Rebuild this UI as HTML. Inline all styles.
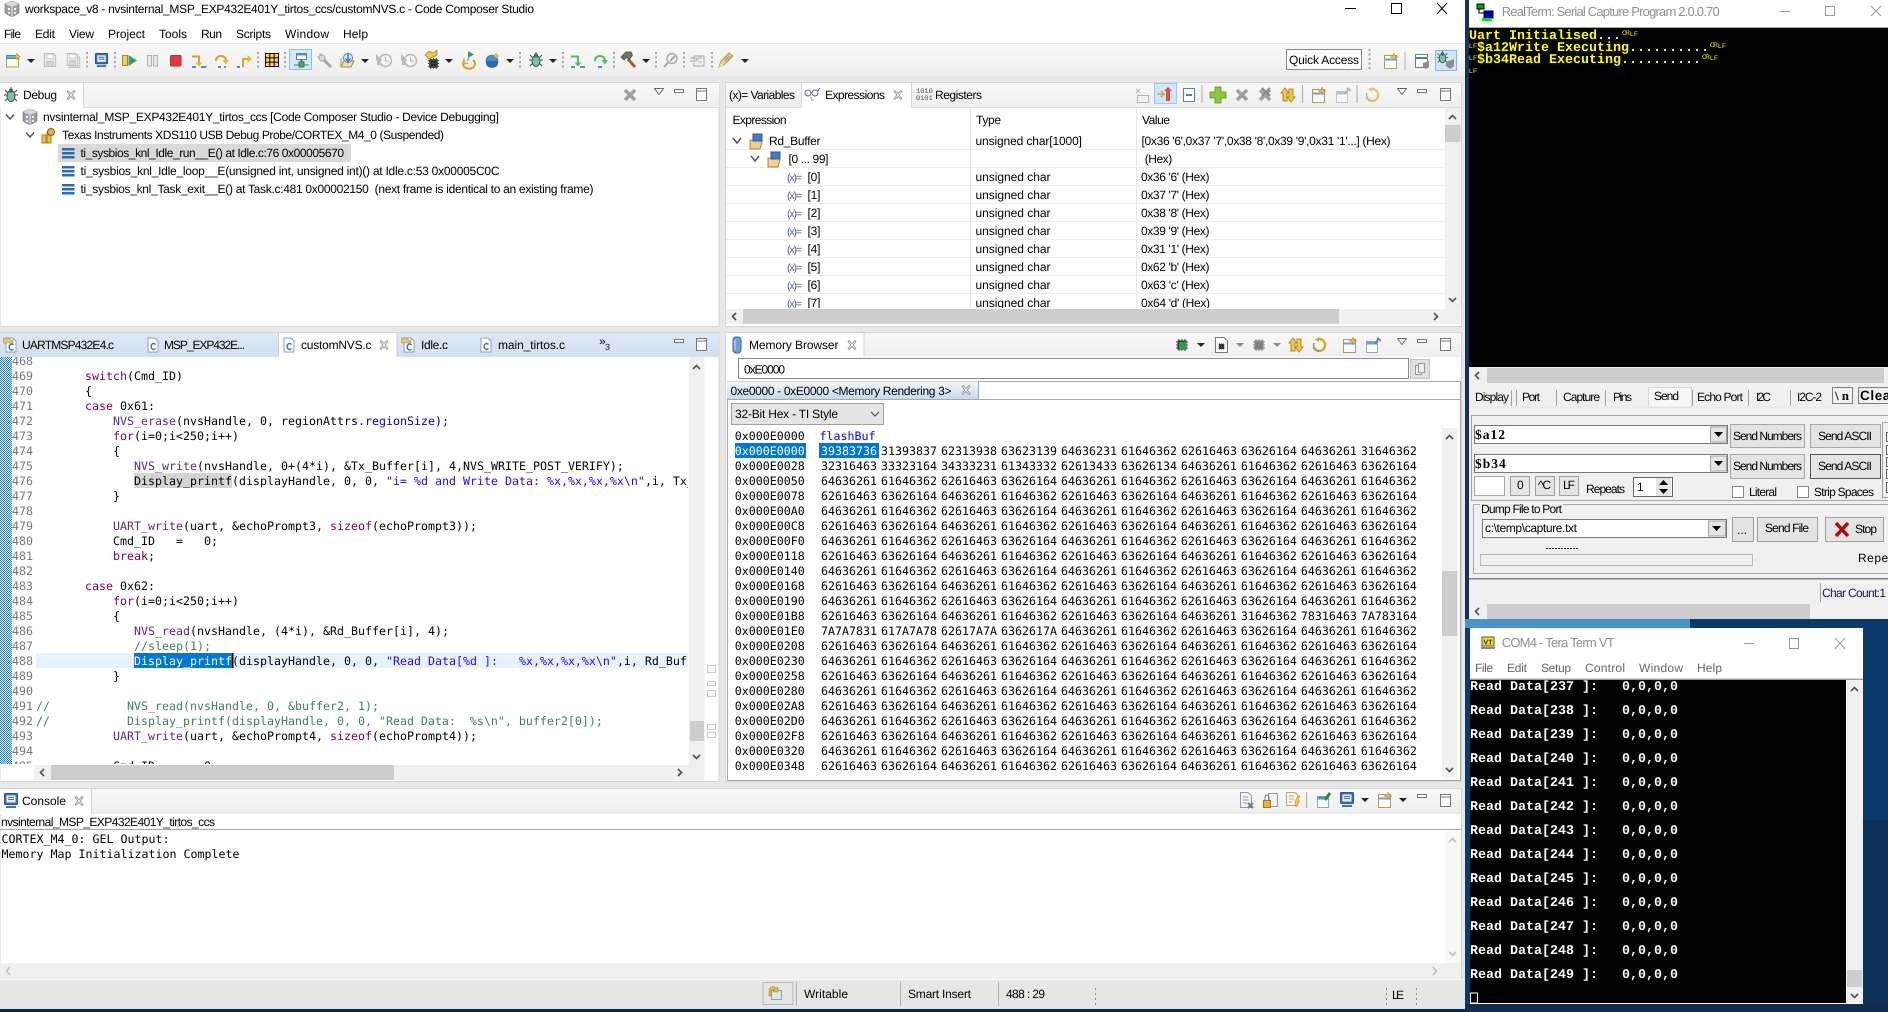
<!DOCTYPE html>
<html><head><meta charset="utf-8"><title>Code Composer Studio</title>
<style>
html,body{margin:0;padding:0;background:#0c2a4b;width:1888px;height:1012px;overflow:hidden}
svg{position:absolute;left:0;top:0;display:block}
text{white-space:pre;text-rendering:geometricPrecision}
.s{font:12px "Liberation Sans",sans-serif;fill:#000}
.g{font:12px "Liberation Sans",sans-serif;fill:#909090}
.m{font:11.63px "DejaVu Sans Mono",monospace;fill:#000}
.h{font:11.63px "DejaVu Sans Mono",monospace;fill:#000;word-spacing:-3px}
.n{font:11.63px "DejaVu Sans Mono",monospace;fill:#787878}
.y{font:bold 13.33px "Liberation Mono",monospace;fill:#ff0}
.w{font:bold 13.33px "Liberation Mono",monospace;fill:#fff}
.c{font:6.5px "Liberation Sans",sans-serif;fill:#ff0}
.v{font:10.5px "Liberation Sans",sans-serif;fill:#4a5a8a}
.kw{fill:#7f0055}.fn{fill:#642880}.fd{fill:#0000c0}.st{fill:#2a00ff}.cm{fill:#3f7f5f}
</style></head><body>
<svg width="1888" height="1012" viewBox="0 0 1888 1012" xmlns="http://www.w3.org/2000/svg">
<defs>
<linearGradient id="gs" x1="0" y1="0" x2="0" y2="1"><stop offset="0" stop-color="#f8f8f8"/><stop offset="1" stop-color="#efefef"/></linearGradient>
<linearGradient id="gb" x1="0" y1="0" x2="0" y2="1"><stop offset="0" stop-color="#dfe9f6"/><stop offset="1" stop-color="#d0dff1"/></linearGradient>
<linearGradient id="gt" x1="0" y1="0" x2="0" y2="1"><stop offset="0" stop-color="#f4f8fc"/><stop offset="1" stop-color="#c6d9ee"/></linearGradient>
<pattern id="hatch" width="2" height="2" patternUnits="userSpaceOnUse"><rect width="2" height="2" fill="#fff"/><rect width="1" height="1" fill="#0f7ed4"/><rect x="1" y="1" width="1" height="1" fill="#0f7ed4"/></pattern>
<clipPath id="cEd"><rect x="0" y="357" width="688" height="407"/></clipPath>
<clipPath id="cEx"><rect x="726" y="110" width="719" height="198"/></clipPath>
<clipPath id="cRT"><rect x="1469" y="383" width="419" height="240"/></clipPath>
<symbol id="x" viewBox="0 0 10 10" width="10" height="10"><path d="M1 1.500 2 .5 5 3.500 8 .5 9 1.500 6 5 9 8.500 8 9.500 5 6.500 2 9.500 1 8.500 4 5Z" fill="#fff" stroke="#8a8a8a" stroke-width=".8"/></symbol>
<symbol id="cf" viewBox="0 0 16 16" width="16" height="16"><path d="M3 1H10L13 4V15H3Z" fill="#fff" stroke="#8aa0b8"/><path d="M10.500 7.500A2.500 3 0 1 0 10.500 11.500" fill="none" stroke="#3a6ea8" stroke-width="1.400"/></symbol>
<symbol id="ch" viewBox="0 0 16 16" width="16" height="16"><path d="M3 1H10L13 4V15H3Z" fill="#fff" stroke="#8aa0b8"/><path d="M10.500 8A2.500 3 0 1 0 10.500 12" fill="none" stroke="#3a6ea8" stroke-width="1.400"/><path d="M0 1H6L7 3H10V6H0Z" fill="#e3c36e" stroke="#a8893a" stroke-width=".6"/></symbol>
<symbol id="cube" viewBox="0 0 16 16" width="16" height="16"><path d="M8 0 15 3V12L8 16 1 12V3Z" fill="#9aa0a6" stroke="#6a6e72" stroke-width=".6"/><path d="M8 0 15 3 8 6 1 3Z" fill="#d8dadc"/><path d="M8 6V16" stroke="#eee"/><rect x="4" y="7" width="2" height="2" fill="#fff"/><rect x="10" y="7" width="2" height="2" fill="#fff"/><rect x="4" y="11" width="2" height="2" fill="#eee"/><rect x="10" y="11" width="2" height="2" fill="#eee"/></symbol>
<symbol id="bug" viewBox="0 0 16 16" width="16" height="16"><path d="M2 3 5 6M14 3 11 6M1 8H4M15 8H12M2 14 5 11M14 14 11 11M8 0V3" stroke="#3f4f3a" fill="none"/><ellipse cx="8" cy="9" rx="4" ry="5.500" fill="#7fbfa0" stroke="#2f5f4a"/><circle cx="8" cy="3.500" r="2" fill="#2f6f5f"/></symbol>
<symbol id="new" viewBox="0 0 16 16" width="16" height="16"><rect x="1.500" y="3.500" width="11" height="12" fill="#fff" stroke="#b89a4a"/><rect x="1.500" y="3.500" width="11" height="3" fill="#6fa2cf" stroke="#4a7fae"/><path d="M12 0 13 3 16 4 13 5 12 8 11 5 8 4 11 3Z" fill="#f0c040" stroke="#b08a20" stroke-width=".5"/></symbol>
<symbol id="save" viewBox="0 0 16 16" width="16" height="16"><path d="M1.500 .5H12L14.500 3V15.500H1.500Z" fill="#ececec" stroke="#b4b4b4"/><rect x="4.500" y="1.500" width="7" height="5" fill="#fff" stroke="#c8c8c8"/><rect x="4.500" y="9.500" width="7" height="6" fill="#d4d4d4" stroke="#bdbdbd"/></symbol>
<symbol id="mon" viewBox="0 0 16 16" width="16" height="16"><rect x="1.500" y="0.500" width="13" height="11" rx="1" fill="#3f70a8" stroke="#2a5488"/><rect x="3.500" y="2.500" width="9" height="7" fill="#e8eff7"/><path d="M5 4.500H11M5 6.500H11" stroke="#3f70a8"/><rect x="3" y="13" width="10" height="2" fill="#3f70a8"/></symbol>
<symbol id="drop" viewBox="0 0 8 4" width="8" height="4"><path d="M0 0H8L4 4Z" fill="#222"/></symbol>
<symbol id="vtri" viewBox="0 0 10 7" width="10" height="7"><path d="M.5 .5H9.500L5 6.500Z" fill="#fff" stroke="#666"/></symbol>
<symbol id="vmin" viewBox="0 0 10 4" width="10" height="4"><rect x=".5" y=".5" width="9" height="3" fill="#fff" stroke="#777"/></symbol>
<symbol id="vmax" viewBox="0 0 11 13" width="11" height="13"><rect x=".5" y=".5" width="10" height="12" fill="#fff" stroke="#777"/><path d="M.5 3H10.500" stroke="#777"/></symbol>
<symbol id="grayx" viewBox="0 0 16 16" width="16" height="16"><path d="M3 3 13 13M13 3 3 13" stroke="#a0a0a0" stroke-width="3.500"/></symbol>
<symbol id="chip" viewBox="0 0 16 16" width="16" height="16"><rect x="3.500" y="3.500" width="9" height="9" fill="#222"/><path d="M2 5H14M2 8H14M2 11H14M5 2V14M8 2V14M11 2V14" stroke="#444"/></symbol>
<symbol id="sync" viewBox="0 0 16 16" width="16" height="16"><path d="M3 14V6H1L5 1 9 6H7V14Z" fill="#f0c850" stroke="#b08a20"/><path d="M9 2V10H7L11 15 15 10H13V2Z" fill="#f0c850" stroke="#b08a20"/></symbol>
<symbol id="loop" viewBox="0 0 16 16" width="16" height="16"><path d="M8 2A6 6 0 1 1 2.500 10" fill="none" stroke="#d9a520" stroke-width="2.200"/><path d="M8 14A6 6 0 0 1 3 6" fill="none" stroke="#8f8f8f" stroke-width="1.500"/><path d="M8 0V5L4 2.500Z" fill="#d9a520"/></symbol>
<symbol id="pin" viewBox="0 0 16 16" width="16" height="16"><rect x="1.500" y="4.500" width="11" height="11" fill="#fff" stroke="#8aa8c8"/><rect x="1.500" y="4.500" width="11" height="3" fill="#6fa2cf"/><path d="M10 7 14 1M12 1 16 4" stroke="#777" stroke-width="1.600"/></symbol>
<symbol id="view" viewBox="0 0 16 16" width="16" height="16"><rect x="1.500" y="2.500" width="12" height="13" fill="#fff" stroke="#b89a4a"/><path d="M11 0 12 3 15 4 12 5 11 8 10 5 7 4 10 3Z" fill="#f0c040" stroke="#b08a20" stroke-width=".5"/><path d="M1.500 6.500H13.500" stroke="#6fa2cf" stroke-width="2"/></symbol>
<symbol id="clk" viewBox="0 0 18 16" width="18" height="16"><circle cx="10.500" cy="7.500" r="6" fill="#f4f4f4" stroke="#b8b8b8" stroke-width="1.400"/><path d="M10.500 4V7.500L13.500 9" stroke="#b0b0b0" fill="none"/><path d="M1 1 7 7 5 9 8 12H2V8L1 7Z" fill="#bcbcbc"/></symbol>
</defs>

<!-- base -->
<rect width="1888" height="1012" fill="#0c2a4b"/>
<rect x="0" y="0" width="1465" height="1009" fill="#e8e8e8"/>
<rect x="0" y="0" width="1465" height="43" fill="#fff"/>
<rect x="0" y="43" width="1465" height="33" fill="url(#gs)"/>
<rect x="0" y="43" width="1465" height="1" fill="#e6e6e6"/>

<!-- title -->
<use href="#cube" x="4" y="1"/>
<text class="s" x="25" y="13" textLength="509" fill="#111">workspace_v8 - nvsinternal_MSP_EXP432E401Y_tirtos_ccs/customNVS.c - Code Composer Studio</text>
<path d="M1345 8.500H1356" stroke="#000"/><rect x="1391.500" y="3.500" width="10" height="10" fill="none" stroke="#000"/><path d="M1437 3 1447 14M1447 3 1437 14" stroke="#000"/>
<text class="s" x="4" y="38" textLength="17">File</text><text class="s" x="35" y="38" textLength="20">Edit</text><text class="s" x="69" y="38" textLength="25">View</text><text class="s" x="108" y="38" textLength="37">Project</text><text class="s" x="159" y="38" textLength="28">Tools</text><text class="s" x="201" y="38" textLength="21">Run</text><text class="s" x="236" y="38" textLength="35">Scripts</text><text class="s" x="285" y="38" textLength="44">Window</text><text class="s" x="343" y="38" textLength="25">Help</text>

<!-- toolbar -->
<g transform="translate(6 53)"><rect x=".5" y="2.500" width="12" height="11.500" fill="#fffbe8" stroke="#b89a4a"/><rect x=".5" y="2.500" width="12" height="3" fill="#7fb0da" stroke="#4a7fae"/><path d="M11 0 12 2.500 14.500 3.500 12 4.500 11 7 10 4.500 7.500 3.500 10 2.500Z" fill="#f4c840" stroke="#b08a20" stroke-width=".5"/></g>
<use href="#drop" x="27" y="59"/>
<use href="#save" x="43" y="53" width="14" height="14"/><use href="#save" x="68" y="55" width="13" height="13"/><use href="#save" x="66" y="53" width="13" height="13"/>
<path d="M87 52V69M115 52V69M258 52V69M285 52V69M520 52V69M563 52V69M614 52V69M656 52V69M684 52V69M712 52V69" stroke="#a8a8a0" stroke-width="2" stroke-dasharray="2 2.500"/>
<use href="#mon" x="94" y="53" width="15" height="15"/>
<g transform="translate(122 55)"><rect x=".5" y=".5" width="5" height="10" fill="#f0d060" stroke="#a88a20"/><path d="M6.500 0 15 5.500 6.500 11Z" fill="#3c9a6a"/></g>
<g transform="translate(147 55)" fill="#e9e9e9" stroke="#b4b4b4"><rect x=".5" y=".5" width="4" height="10.500"/><rect x="6.500" y=".5" width="4" height="10.500"/></g>
<rect x="170.500" y="55.500" width="10.500" height="10.500" rx="1" fill="#e63838" stroke="#b03040"/>
<g transform="translate(191 54)" fill="none"><path d="M1 2.500H8V9" stroke="#d9a520" stroke-width="2"/><path d="M4.500 8.500H11.500L8 12.500Z" fill="#e8b830"/><path d="M1 13H5M10 13H15.500" stroke="#2a6ea8" stroke-width="1.600"/></g>
<g transform="translate(214 54)" fill="none"><path d="M2 7A5 4.500 0 0 1 12 6" stroke="#d9a520" stroke-width="2"/><path d="M8.500 6H15L12 10.500Z" fill="#e8b830"/><path d="M4 13H7M10 13H12" stroke="#2a6ea8" stroke-width="1.600"/></g>
<g transform="translate(237 54)" fill="none"><path d="M6 13V5H11" stroke="#d9a520" stroke-width="2"/><path d="M10.500 1 15 5 10.500 9Z" fill="#e8b830"/><path d="M0 13H3" stroke="#2a6ea8" stroke-width="1.600"/></g>
<g transform="translate(265 53)"><rect x=".5" y=".5" width="13" height="13" fill="#ffcf50" stroke="#000"/><path d="M4.800 .5V13.500M9.200 .5V13.500M.5 4.800H13.500M.5 9.200H13.500" stroke="#000"/></g>
<rect x="289.500" y="49.500" width="22" height="20" fill="#d4e9fb" stroke="#8cc0ec"/>
<g transform="translate(293 52)"><rect x="3.500" y="1.500" width="10" height="6" fill="#fff" stroke="#5a7ea8"/><rect x="3.500" y="1.500" width="10" height="2" fill="#5a90c8"/><path d="M8.500 7V11" stroke="#666" stroke-width="2"/><path d="M1 13H16" stroke="#6a8aa8" stroke-width="1.200"/><rect x="6" y="10" width="5" height="5" fill="#5aaa5a" stroke="#357a35"/></g>
<g transform="translate(317 53)" stroke="#a8a8a8" fill="none"><path d="M2 1 4 3M0 4 3 4M4 0 4 3" /><circle cx="5" cy="5" r="3" fill="#ddd"/><path d="M7 7 14 14" stroke-width="3"/></g>
<g transform="translate(340 53)"><path d="M1 5V14H11L14 8H4L1 14" fill="#f3deaa" stroke="#b08a3a"/><circle cx="8" cy="5" r="4.500" fill="#dbe9f7" stroke="#5a7ea8"/><path d="M8 1V8M5.500 5.500 8 8.500 10.500 5.500" fill="none" stroke="#2f6fb0" stroke-width="1.300"/></g><use href="#drop" x="361" y="59"/>
<use href="#clk" x="375" y="53"/><use href="#clk" x="400" y="53"/>
<use href="#chip" x="426" y="56" width="15" height="15"/><path d="M425 55 429 51 433 53 437 50V55L433 57 429 59Z" fill="#f0c840" stroke="#a88010" stroke-width=".7"/><use href="#drop" x="445" y="59"/>
<g transform="translate(461 51)" fill="none"><path d="M3 10A6 5 0 1 0 12 9" stroke="#d9a520" stroke-width="2"/><path d="M3 7.500V12.500H7" stroke="#d9a520" stroke-width="1.500"/><path d="M7 0 13 3.500 7 7Z" fill="#3c9a6a"/><path d="M7 7V10" stroke="#3c9a6a"/></g>
<g transform="translate(486 53)"><ellipse cx="6" cy="8" rx="6" ry="6" fill="#4a8ed0" stroke="#2a62a0" stroke-width=".6"/><path d="M0 8H12V10A6 5 0 0 1 0 10Z" fill="#2f6aac"/><path d="M10 0 11 2 13 3 11 4 10 6 9 4 7 3 9 2Z" fill="#f0c040" stroke="#a88010" stroke-width=".4"/></g><use href="#drop" x="506" y="59"/>
<use href="#bug" x="528" y="52"/><use href="#drop" x="549" y="59"/>
<g transform="translate(570 54)" fill="none"><path d="M1 2.500H8V9" stroke="#4cc060" stroke-width="2"/><path d="M4.500 8.500H11.500L8 12.500Z" fill="#4cc060"/><path d="M1 13H5M10 13H15" stroke="#2a6ea8" stroke-width="1.600"/></g>
<g transform="translate(593 54)" fill="none"><path d="M2 7A5 4.500 0 0 1 12 6" stroke="#4cc060" stroke-width="2"/><path d="M8.500 6H15L12 10.500Z" fill="#4cc060"/><path d="M5 13H9" stroke="#2a6ea8" stroke-width="1.600"/></g>
<g transform="translate(621 52)"><path d="M7 7 14 15" stroke="#9a6a30" stroke-width="3"/><path d="M0 5 5 0H10L11.500 3 8 8 6 5 3 8Z" fill="#70706e" stroke="#444" stroke-width=".7"/></g><use href="#drop" x="642" y="59"/>
<g transform="translate(663 52)" fill="none" stroke="#a8a8a8"><circle cx="9" cy="6.500" r="5" stroke-width="1.400"/><path d="M5 10.500 1 15M12 4 7 9" stroke-width="2"/></g>
<g transform="translate(690 53)" fill="none" stroke="#b4b4b4" stroke-width="1.200"><path d="M4 3H14V13H4V10M4 7V3"/><path d="M0 5H6L8 6.500 6 8H0M8 5H12M8 9H12"/></g>
<g transform="translate(718 52)"><path d="M1 15 3 9 11 1 15 4 7 12Z" fill="#f1cf7d" stroke="#b8973a"/><path d="M6 7 11 3 13 5 8 10Z" fill="#b0b0a8"/><path d="M1 15 3 11 5 13Z" fill="#f4f0c0"/></g><use href="#drop" x="741" y="59"/>
<rect x="1286.500" y="49.500" width="75" height="20" fill="#fff" stroke="#888"/>
<text class="s" x="1289" y="64" textLength="70" fill="#444">Quick Access</text>
<path d="M1369.500 49V71" stroke="#a8a8a0" stroke-width="2" stroke-dasharray="2 2.500"/><path d="M1405 52V70" stroke="#b8b8b8"/>
<use href="#view" x="1383" y="53"/>
<g transform="translate(1414 53)"><rect x="1.500" y="1.500" width="12" height="13" fill="#fff" stroke="#777"/><path d="M1.500 5H13.500" stroke="#4a7fae" stroke-width="2"/><path d="M9 10 15 8V14L12 16 9 14Z" fill="#8c8c8c"/></g>
<rect x="1435.500" y="50.500" width="21" height="20" fill="#cfe6fb" stroke="#7fb8e8"/><use href="#bug" x="1436" y="51" width="13" height="13"/><path d="M1446 62 1454 59V66L1450 69 1446 66Z" fill="#8c8c8c"/>

<!-- Debug view -->
<rect x="0" y="82.500" width="719" height="244" fill="#fff" stroke="#d6d6d6"/>
<rect x="0" y="83" width="719" height="24" fill="url(#gs)"/>
<path d="M0 107.500H719" stroke="#dedede"/>
<rect x="0" y="83" width="83" height="25" fill="#fff"/><path d="M83.500 83V107" stroke="#d6d6d6"/>
<use href="#bug" x="3" y="87"/>
<text class="s" x="23" y="99" textLength="34" fill="#222">Debug</text><use href="#x" x="66" y="90"/>
<use href="#grayx" x="622" y="87"/><use href="#vtri" x="654" y="88"/><use href="#vmin" x="674" y="89"/><use href="#vmax" x="696" y="88"/>
<path d="M6 114.500 10 119 14 114.500M26 132.500 30 137 34 132.500" fill="none" stroke="#555" stroke-width="1.500"/>
<use href="#cube" x="22" y="109"/>
<text class="s" x="43" y="121" textLength="456">nvsinternal_MSP_EXP432E401Y_tirtos_ccs [Code Composer Studio - Device Debugging]</text>
<g transform="translate(41 127)"><rect x="1" y="8" width="4" height="8" fill="#e8c050" stroke="#a88020"/><rect x="6" y="5" width="4" height="11" fill="#e8c050" stroke="#a88020"/><circle cx="10" cy="5" r="3.500" fill="#e8b040" stroke="#8a5a20"/></g>
<text class="s" x="62" y="139" textLength="382">Texas Instruments XDS110 USB Debug Probe/CORTEX_M4_0 (Suspended)</text>
<rect x="58" y="144" width="293" height="18" fill="#d9d9d9"/>
<g fill="#2a6cb0"><rect x="62" y="148" width="12.500" height="2.500"/><rect x="62" y="152" width="12.500" height="2.500"/><rect x="62" y="156" width="12.500" height="2.500"/><rect x="62" y="166" width="12.500" height="2.500"/><rect x="62" y="170" width="12.500" height="2.500"/><rect x="62" y="174" width="12.500" height="2.500"/><rect x="62" y="184" width="12.500" height="2.500"/><rect x="62" y="188" width="12.500" height="2.500"/><rect x="62" y="192" width="12.500" height="2.500"/></g>
<text class="s" x="80.500" y="157" textLength="263.500">ti_sysbios_knl_Idle_run__E() at Idle.c:76 0x00005670</text>
<text class="s" x="80.500" y="175" textLength="419">ti_sysbios_knl_Idle_loop__E(unsigned int, unsigned int)() at Idle.c:53 0x00005C0C</text>
<text class="s" x="80.500" y="193" textLength="513">ti_sysbios_knl_Task_exit__E() at Task.c:481 0x00002150  (next frame is identical to an existing frame)</text>

<!-- Expressions view -->
<rect x="725.500" y="82.500" width="736" height="244" fill="#fff" stroke="#d6d6d6"/>
<rect x="726" y="83" width="735" height="24" fill="url(#gs)"/>
<path d="M726 107.500H1461" stroke="#dedede"/>
<rect x="801" y="83" width="110" height="25" fill="#fff"/><path d="M801.500 83V107M911.500 83V107" stroke="#d6d6d6"/>
<text class="s" x="729" y="99" textLength="66" fill="#222">(x)= Variables</text>
<g transform="translate(804 87)" fill="none" stroke="#5a6a8a"><circle cx="4" cy="6" r="3"/><circle cx="11" cy="6" r="3"/><path d="M7 6H8M14 4 16 1"/><path d="M7 13H10M6 11H8" stroke="#888"/></g>
<text class="s" x="825" y="99" textLength="60" fill="#222">Expressions</text><use href="#x" x="893" y="90"/>
<text x="916" y="93" font-family="Liberation Mono,monospace" font-size="7" fill="#555">1010</text><text x="916" y="100" font-family="Liberation Mono,monospace" font-size="7" fill="#555">0101</text>
<text class="s" x="935" y="99" textLength="47" fill="#222">Registers</text>
<g transform="translate(1134 87)" stroke="#b5b5b5" fill="none"><path d="M2 2 6 6M6 2 2 6"/><rect x="3.500" y="8.500" width="11" height="7"/></g>
<rect x="1154.500" y="83.500" width="22" height="20" fill="#cfe6fb" stroke="#9ccaf0"/>
<g transform="translate(1157 86)"><path d="M0 8H7M4 5 7 8 4 11" stroke="#d9a520" stroke-width="1.500" fill="none"/><path d="M11 1 15 5H7ZM9 5V15H13V5" fill="#d45050"/></g>
<g transform="translate(1181 87)"><rect x="2.500" y="1.500" width="11" height="13" fill="#fff" stroke="#5a7ea8"/><path d="M5 8H11" stroke="#2a5a98" stroke-width="1.600"/></g>
<path d="M1202 85V103M1302.500 85V103M1357 85V103M1334 335V353" stroke="#aaa"/>
<path d="M1215 87H1221V92H1226V98H1221V103H1215V98H1210V92H1215Z" fill="#8cc63f" stroke="#5c8f20" stroke-width=".8"/>
<use href="#grayx" x="1234" y="87"/><use href="#grayx" x="1257" y="87"/><path d="M1262 88 1270 96M1270 88 1262 96" stroke="#888" stroke-width="2"/>
<use href="#sync" x="1280" y="87"/><use href="#view" x="1311" y="87"/><use href="#pin" x="1335" y="87" opacity=".55"/>
<use href="#loop" x="1364" y="87" opacity=".6"/>
<use href="#vtri" x="1397" y="88"/><use href="#vmin" x="1417" y="89"/><use href="#vmax" x="1440" y="88"/>

<text class="s" x="732.500" y="124" textLength="54">Expression</text>
<text class="s" x="976" y="124" textLength="25">Type</text>
<text class="s" x="1142" y="124" textLength="28">Value</text>
<path d="M970.500 108V308M1136.500 108V308" stroke="#e6e6e6"/>
<path d="M726 149.500H1445M726 167.500H1445M726 185.500H1445M726 203.500H1445M726 221.500H1445M726 239.500H1445M726 257.500H1445M726 275.500H1445M726 293.500H1445" stroke="#ececec"/>
<g clip-path="url(#cEx)">
<path d="M733 138 737 143 741 138M751 156 755 161 759 156" fill="none" stroke="#555" stroke-width="1.500"/>
<g transform="translate(749 133)"><path d="M1 7H11L13 9 11 16H1Z" fill="#f1d08c" stroke="#a8873a"/><path d="M4 1H13V8H4Z" fill="#3f7fc0" stroke="#2a5a98"/></g>
<g transform="translate(767 151)"><path d="M1 7H11L13 9 11 16H1Z" fill="#f1d08c" stroke="#a8873a"/><path d="M4 1H13V8H4Z" fill="#3f7fc0" stroke="#2a5a98"/></g>
<text class="s" x="769" y="145" textLength="51.500">Rd_Buffer</text>
<text class="s" x="975.500" y="145" textLength="106.500">unsigned char[1000]</text>
<text class="s" x="1141.500" y="145" textLength="249">[0x36 '6',0x37 '7',0x38 '8',0x39 '9',0x31 '1'...] (Hex)</text>
<text class="s" x="788.500" y="163" textLength="40">[0 ... 99]</text>
<text class="s" x="1144.700" y="163" textLength="27.500">(Hex)</text>
<text class="v" x="787" y="181" textLength="15">(x)=</text><text class="s" x="807.500" y="181" textLength="13">[0]</text><text class="s" x="975.500" y="181" textLength="75">unsigned char</text><text class="s" x="1141" y="181" textLength="68.500">0x36 '6' (Hex)</text>
<text class="v" x="787" y="199" textLength="15">(x)=</text><text class="s" x="807.500" y="199" textLength="13">[1]</text><text class="s" x="975.500" y="199" textLength="75">unsigned char</text><text class="s" x="1141" y="199" textLength="68.500">0x37 '7' (Hex)</text>
<text class="v" x="787" y="217" textLength="15">(x)=</text><text class="s" x="807.500" y="217" textLength="13">[2]</text><text class="s" x="975.500" y="217" textLength="75">unsigned char</text><text class="s" x="1141" y="217" textLength="68.500">0x38 '8' (Hex)</text>
<text class="v" x="787" y="235" textLength="15">(x)=</text><text class="s" x="807.500" y="235" textLength="13">[3]</text><text class="s" x="975.500" y="235" textLength="75">unsigned char</text><text class="s" x="1141" y="235" textLength="68.500">0x39 '9' (Hex)</text>
<text class="v" x="787" y="253" textLength="15">(x)=</text><text class="s" x="807.500" y="253" textLength="13">[4]</text><text class="s" x="975.500" y="253" textLength="75">unsigned char</text><text class="s" x="1141" y="253" textLength="68.500">0x31 '1' (Hex)</text>
<text class="v" x="787" y="271" textLength="15">(x)=</text><text class="s" x="807.500" y="271" textLength="13">[5]</text><text class="s" x="975.500" y="271" textLength="75">unsigned char</text><text class="s" x="1141" y="271" textLength="68.500">0x62 'b' (Hex)</text>
<text class="v" x="787" y="289" textLength="15">(x)=</text><text class="s" x="807.500" y="289" textLength="13">[6]</text><text class="s" x="975.500" y="289" textLength="75">unsigned char</text><text class="s" x="1141" y="289" textLength="68.500">0x63 'c' (Hex)</text>
<text class="v" x="787" y="307" textLength="15">(x)=</text><text class="s" x="807.500" y="307" textLength="13">[7]</text><text class="s" x="975.500" y="307" textLength="75">unsigned char</text><text class="s" x="1141" y="307" textLength="69">0x64 'd' (Hex)</text>
</g>
<rect x="1445" y="108" width="16" height="201" fill="#f0f0f0"/><rect x="1445" y="125" width="15.500" height="17" fill="#cdcdcd"/>
<path d="M1449 119 1452.500 115.500 1456 119M1449 298 1452.500 301.500 1456 298" fill="none" stroke="#505050" stroke-width="1.600"/>
<rect x="726" y="309" width="734" height="15" fill="#f0f0f0"/><rect x="743" y="309" width="596" height="15" fill="#cdcdcd"/>
<path d="M736 313 732.500 316.500 736 320M1434 313 1437.500 316.500 1434 320" fill="none" stroke="#505050" stroke-width="1.600"/>

<!-- Editor view -->
<rect x="0" y="332.500" width="719" height="449" fill="#fff" stroke="#d6d6d6"/>
<rect x="0" y="333" width="719" height="24" fill="url(#gb)"/>
<rect x="278" y="333" width="119" height="25" fill="#fff"/><path d="M278.500 333V357M397 333V357" stroke="#c0cede"/>
<use href="#ch" x="3" y="337"/><text class="s" x="22" y="349" textLength="92" fill="#222">UARTMSP432E4.c</text>
<use href="#cf" x="145" y="337"/><text class="s" x="164" y="349" textLength="81" fill="#222">MSP_EXP432E...</text>
<use href="#cf" x="281" y="337"/><text class="s" x="301" y="349" textLength="70.500" fill="#222">customNVS.c</text><use href="#x" x="379" y="340"/>
<use href="#ch" x="401" y="337"/><text class="s" x="421" y="349" textLength="27" fill="#222">Idle.c</text>
<use href="#cf" x="478" y="337"/><text class="s" x="498" y="349" textLength="67" fill="#222">main_tirtos.c</text>
<text class="s" x="599" y="345" font-weight="bold" fill="#222">»</text><text x="605" y="350" font-family="Liberation Sans" font-size="9" fill="#222">3</text>
<use href="#vmin" x="674" y="339"/><use href="#vmax" x="696" y="338"/>
<rect x="0" y="357" width="12" height="407" fill="url(#hatch)"/>
<rect x="36" y="653" width="652" height="15" fill="#e8f2fe"/>
<rect x="134" y="473" width="98" height="15" fill="#d4d4d4"/>
<rect x="134" y="653" width="98" height="15" fill="#0078d7"/>
<rect x="232" y="653" width="1.500" height="15" fill="#000"/>
<g clip-path="url(#cEd)">
<text class="n" x="12" y="365">468</text><text class="n" x="12" y="380">469</text><text class="n" x="12" y="395">470</text><text class="n" x="12" y="410">471</text><text class="n" x="12" y="425">472</text><text class="n" x="12" y="440">473</text><text class="n" x="12" y="455">474</text><text class="n" x="12" y="470">475</text><text class="n" x="12" y="485">476</text><text class="n" x="12" y="500">477</text><text class="n" x="12" y="515">478</text><text class="n" x="12" y="530">479</text><text class="n" x="12" y="545">480</text><text class="n" x="12" y="560">481</text><text class="n" x="12" y="575">482</text><text class="n" x="12" y="590">483</text><text class="n" x="12" y="605">484</text><text class="n" x="12" y="620">485</text><text class="n" x="12" y="635">486</text><text class="n" x="12" y="650">487</text><text class="n" x="12" y="665">488</text><text class="n" x="12" y="680">489</text><text class="n" x="12" y="695">490</text><text class="n" x="12" y="710">491</text><text class="n" x="12" y="725">492</text><text class="n" x="12" y="740">493</text><text class="n" x="12" y="755">494</text><text class="n" x="12" y="770">495</text>
<text class="m" x="85" y="380"><tspan class="kw">switch</tspan>(Cmd_ID)</text>
<text class="m" x="85" y="395">{</text>
<text class="m" x="85" y="410"><tspan class="kw">case</tspan> 0x61:</text>
<text class="m" x="113" y="425"><tspan class="fn">NVS_erase</tspan>(nvsHandle, 0, regionAttrs.<tspan class="fd">regionSize</tspan>);</text>
<text class="m" x="113" y="440"><tspan class="kw">for</tspan>(i=0;i&lt;250;i++)</text>
<text class="m" x="113" y="455">{</text>
<text class="m" x="134" y="470"><tspan class="fn">NVS_write</tspan>(nvsHandle, 0+(4*i), &amp;Tx_Buffer[i], 4,NVS_WRITE_POST_VERIFY);</text>
<text class="m" x="134" y="485">Display_printf(displayHandle, 0, 0, <tspan class="st">"i= %d and Write Data: %x,%x,%x,%x\n"</tspan>,i, Tx_</text>
<text class="m" x="113" y="500">}</text>
<text class="m" x="113" y="530"><tspan class="fn">UART_write</tspan>(uart, &amp;echoPrompt3, <tspan class="kw">sizeof</tspan>(echoPrompt3));</text>
<text class="m" x="113" y="545">Cmd_ID   =   0;</text>
<text class="m" x="113" y="560"><tspan class="kw">break</tspan>;</text>
<text class="m" x="85" y="590"><tspan class="kw">case</tspan> 0x62:</text>
<text class="m" x="113" y="605"><tspan class="kw">for</tspan>(i=0;i&lt;250;i++)</text>
<text class="m" x="113" y="620">{</text>
<text class="m" x="134" y="635"><tspan class="fn">NVS_read</tspan>(nvsHandle, (4*i), &amp;Rd_Buffer[i], 4);</text>
<text class="m" x="134" y="650" style="fill:#3f7f5f">//sleep(1);</text>
<text class="m" x="134" y="665"><tspan style="fill:#fff">Display_printf</tspan>(displayHandle, 0, 0, <tspan class="st">"Read Data[%d ]:   %x,%x,%x,%x\n"</tspan>,i, Rd_Buf</text>
<text class="m" x="113" y="680">}</text>
<text class="m" x="36" y="710" style="fill:#3f7f5f">//           NVS_read(nvsHandle, 0, &amp;buffer2, 1);</text>
<text class="m" x="36" y="725" style="fill:#3f7f5f">//           Display_printf(displayHandle, 0, 0, "Read Data:  %s\n", buffer2[0]);</text>
<text class="m" x="113" y="740"><tspan class="fn">UART_write</tspan>(uart, &amp;echoPrompt4, <tspan class="kw">sizeof</tspan>(echoPrompt4));</text>
<text class="m" x="113" y="770">Cmd_ID   =   0;</text>
</g>
<rect x="689" y="357" width="15.500" height="423" fill="#f0f0f0"/><rect x="690" y="721" width="14" height="20" fill="#cdcdcd"/>
<path d="M693 369 696.500 365.500 700 369M693 755 696.500 758.500 700 755" fill="none" stroke="#505050" stroke-width="1.600"/>
<g fill="none" stroke="#c8c8c8"><rect x="707.500" y="665.500" width="8" height="7"/><rect x="707.500" y="681.500" width="8" height="4"/><rect x="707.500" y="690.500" width="8" height="6"/><rect x="707.500" y="724.500" width="8" height="5"/><rect x="707.500" y="732.500" width="8" height="5"/></g>
<rect x="34" y="765" width="670" height="15" fill="#f0f0f0"/><rect x="51" y="765" width="343" height="15" fill="#cdcdcd"/>
<path d="M44 769 40.500 772.500 44 776M678 769 681.500 772.500 678 776" fill="none" stroke="#505050" stroke-width="1.600"/>

<!-- Memory Browser view -->
<rect x="725.500" y="332.500" width="736" height="449" fill="#fff" stroke="#d6d6d6"/>
<rect x="726" y="333" width="735" height="24" fill="url(#gs)"/>
<rect x="726" y="333" width="138" height="25" fill="#fff"/><path d="M864 333V357" stroke="#d6d6d6"/>
<g transform="translate(732 336)"><rect x="1" y="1" width="8" height="16" rx="3" fill="#6f9fd8" stroke="#3a6aa8"/><path d="M3 4V14" stroke="#d8e6f8"/></g>
<text class="s" x="749" y="349" textLength="89.500" fill="#222">Memory Browser</text><use href="#x" x="847" y="340"/>
<g transform="translate(1174 337)"><use href="#chip" width="16" height="16"/><rect x="5" y="5" width="7" height="7" fill="#2fa040"/></g><use href="#drop" x="1197" y="343"/>
<g transform="translate(1214 337)"><path d="M1.500 .5H10L13.500 4V15.500H1.500Z" fill="#fff" stroke="#777"/><use href="#chip" x="3" y="5" width="9" height="9"/></g><use href="#drop" x="1236" y="343" opacity=".5"/>
<use href="#chip" x="1251" y="337" opacity=".6"/><use href="#drop" x="1273" y="343" opacity=".5"/>
<use href="#sync" x="1288" y="337"/><use href="#loop" x="1311" y="337"/><use href="#view" x="1342" y="337"/><use href="#pin" x="1365" y="337"/>
<use href="#vtri" x="1397" y="338"/><use href="#vmin" x="1417" y="339"/><use href="#vmax" x="1440" y="338"/>
<rect x="738.500" y="358.500" width="670" height="20" fill="#fff" stroke="#8a8a8a"/>
<text class="s" x="744" y="373.500" textLength="41">0xE0000</text>
<rect x="1410.500" y="359.500" width="19" height="19" fill="#e1e1e1" stroke="#c4c4c4"/><rect x="1415.500" y="365.500" width="6" height="9" fill="#eee" stroke="#9a9a9a"/><rect x="1418.500" y="363.500" width="6" height="9" fill="#eee" stroke="#9a9a9a"/>
<rect x="727.500" y="381.500" width="733" height="399" fill="#fff" stroke="#a8a8a8"/>
<path d="M727 381.500H978V399H727Z" fill="url(#gt)"/><path d="M978.500 382V399M727 399.500H1460" stroke="#a8a8a8"/>
<text class="s" x="730.500" y="395" textLength="221">0xe0000 - 0xE0000 &lt;Memory Rendering 3&gt;</text><use href="#x" x="961" y="385"/>
<rect x="731.500" y="403.500" width="152" height="21" fill="#e5e5e5" stroke="#a0a0a0"/>
<text class="s" x="735" y="418" textLength="103">32-Bit Hex - TI Style</text>
<path d="M871 412 875 416 879 412" fill="none" stroke="#555" stroke-width="1.200"/>
<rect x="735" y="443" width="71" height="15" fill="#0078d7"/><rect x="819" y="443" width="60" height="15" fill="#0078d7"/>
<text class="m" x="734.800" y="440">0x000E0000</text><text class="m" x="819.500" y="440" style="fill:#0000ff">flashBuf</text>
<text class="m" x="734.800" y="455" style="fill:#fff">0x000E0000</text><text class="m" x="821" y="455" style="fill:#fff">39383736</text>
<text class="h" x="881" y="455">31393837 62313938 63623139 64636231 61646362 62616463 63626164 64636261 31646362</text>
<text class="m" x="734.800" y="470">0x000E0028</text><text class="h" x="821" y="470">32316463 33323164 34333231 61343332 62613433 63626134 64636261 61646362 62616463 63626164</text>
<text class="m" x="734.800" y="485">0x000E0050</text><text class="h" x="821" y="485">64636261 61646362 62616463 63626164 64636261 61646362 62616463 63626164 64636261 61646362</text>
<text class="m" x="734.800" y="500">0x000E0078</text><text class="h" x="821" y="500">62616463 63626164 64636261 61646362 62616463 63626164 64636261 61646362 62616463 63626164</text>
<text class="m" x="734.800" y="515">0x000E00A0</text><text class="h" x="821" y="515">64636261 61646362 62616463 63626164 64636261 61646362 62616463 63626164 64636261 61646362</text>
<text class="m" x="734.800" y="530">0x000E00C8</text><text class="h" x="821" y="530">62616463 63626164 64636261 61646362 62616463 63626164 64636261 61646362 62616463 63626164</text>
<text class="m" x="734.800" y="545">0x000E00F0</text><text class="h" x="821" y="545">64636261 61646362 62616463 63626164 64636261 61646362 62616463 63626164 64636261 61646362</text>
<text class="m" x="734.800" y="560">0x000E0118</text><text class="h" x="821" y="560">62616463 63626164 64636261 61646362 62616463 63626164 64636261 61646362 62616463 63626164</text>
<text class="m" x="734.800" y="575">0x000E0140</text><text class="h" x="821" y="575">64636261 61646362 62616463 63626164 64636261 61646362 62616463 63626164 64636261 61646362</text>
<text class="m" x="734.800" y="590">0x000E0168</text><text class="h" x="821" y="590">62616463 63626164 64636261 61646362 62616463 63626164 64636261 61646362 62616463 63626164</text>
<text class="m" x="734.800" y="605">0x000E0190</text><text class="h" x="821" y="605">64636261 61646362 62616463 63626164 64636261 61646362 62616463 63626164 64636261 61646362</text>
<text class="m" x="734.800" y="620">0x000E01B8</text><text class="h" x="821" y="620">62616463 63626164 64636261 61646362 62616463 63626164 64636261 31646362 78316463 7A783164</text>
<text class="m" x="734.800" y="635">0x000E01E0</text><text class="h" x="821" y="635">7A7A7831 617A7A78 62617A7A 6362617A 64636261 61646362 62616463 63626164 64636261 61646362</text>
<text class="m" x="734.800" y="650">0x000E0208</text><text class="h" x="821" y="650">62616463 63626164 64636261 61646362 62616463 63626164 64636261 61646362 62616463 63626164</text>
<text class="m" x="734.800" y="665">0x000E0230</text><text class="h" x="821" y="665">64636261 61646362 62616463 63626164 64636261 61646362 62616463 63626164 64636261 61646362</text>
<text class="m" x="734.800" y="680">0x000E0258</text><text class="h" x="821" y="680">62616463 63626164 64636261 61646362 62616463 63626164 64636261 61646362 62616463 63626164</text>
<text class="m" x="734.800" y="695">0x000E0280</text><text class="h" x="821" y="695">64636261 61646362 62616463 63626164 64636261 61646362 62616463 63626164 64636261 61646362</text>
<text class="m" x="734.800" y="710">0x000E02A8</text><text class="h" x="821" y="710">62616463 63626164 64636261 61646362 62616463 63626164 64636261 61646362 62616463 63626164</text>
<text class="m" x="734.800" y="725">0x000E02D0</text><text class="h" x="821" y="725">64636261 61646362 62616463 63626164 64636261 61646362 62616463 63626164 64636261 61646362</text>
<text class="m" x="734.800" y="740">0x000E02F8</text><text class="h" x="821" y="740">62616463 63626164 64636261 61646362 62616463 63626164 64636261 61646362 62616463 63626164</text>
<text class="m" x="734.800" y="755">0x000E0320</text><text class="h" x="821" y="755">64636261 61646362 62616463 63626164 64636261 61646362 62616463 63626164 64636261 61646362</text>
<text class="m" x="734.800" y="770">0x000E0348</text><text class="h" x="821" y="770">62616463 63626164 64636261 61646362 62616463 63626164 64636261 61646362 62616463 63626164</text>
<rect x="1442" y="428" width="15.500" height="349" fill="#f0f0f0"/><rect x="1442" y="571" width="15.500" height="65" fill="#cdcdcd"/>
<path d="M1446 439 1449.500 435.500 1453 439M1446 768 1449.500 771.500 1453 768" fill="none" stroke="#505050" stroke-width="1.600"/>

<!-- Console view -->
<rect x="0" y="788.500" width="1461.500" height="191" fill="#fff" stroke="#d6d6d6"/>
<rect x="0" y="789" width="1461" height="24" fill="url(#gs)"/>
<path d="M0 813H1461" stroke="#dedede"/>
<rect x="0" y="789" width="91" height="25" fill="#fff"/><path d="M91.500 789V813" stroke="#d6d6d6"/>
<use href="#mon" x="3" y="793"/><text class="s" x="22" y="805" textLength="44" fill="#222">Console</text><use href="#x" x="74" y="796"/>
<g transform="translate(1238 792)"><path d="M2.500 .5H10L13.500 4V15.500H2.500Z" fill="#f4f4f4" stroke="#8a9ab0"/><path d="M5 5H10M5 8H11M5 11H9" stroke="#8a9ab0"/><path d="M10 11 15 16M15 11 10 16" stroke="#777" stroke-width="2"/></g>
<g transform="translate(1262 792)"><rect x="6.500" y="1.500" width="9" height="13" fill="#f4f4f4" stroke="#8a9ab0"/><rect x="1.500" y="8.500" width="7" height="7" fill="#e8b040" stroke="#a07818"/><path d="M3 8V5A2 2 0 0 1 7 5V8" fill="none" stroke="#777"/></g>
<g transform="translate(1285 792)"><path d="M1.500 .5H10L12.500 3V13.500H1.500Z" fill="#f4f4f4" stroke="#c0a860"/><path d="M4 4H9M4 7H9M4 10H7" stroke="#c0a860"/><path d="M10 9 13 4H15L13 9H15L11 15Z" fill="#f0c850" stroke="#b08a20" stroke-width=".5"/></g>
<path d="M1306.500 792V808" stroke="#aaa"/>
<g transform="translate(1316 792)"><rect x="1.500" y="4.500" width="11" height="11" fill="#fff" stroke="#8aa8c8"/><rect x="1.500" y="4.500" width="11" height="3" fill="#5a90c0"/><path d="M9 8 14 1" stroke="#2a8a3a" stroke-width="3"/></g>
<use href="#mon" x="1339" y="792"/><use href="#drop" x="1361" y="798"/>
<use href="#view" x="1377" y="792"/><use href="#drop" x="1399" y="798"/>
<use href="#vmin" x="1417" y="794"/><use href="#vmax" x="1440" y="794"/>
<text class="s" x="1" y="826" textLength="214">nvsinternal_MSP_EXP432E401Y_tirtos_ccs</text>
<path d="M0 829.500H1461" stroke="#a6a6a6"/>
<text class="m" x="1.500" y="843">CORTEX_M4_0: GEL Output:</text>
<text class="m" x="1.500" y="858">Memory Map Initialization Complete</text>
<rect x="1445" y="831" width="16" height="132" fill="#f8f8f8"/>
<path d="M1449 842 1452.500 838.500 1456 842M1449 952 1452.500 955.500 1456 952" fill="none" stroke="#c0c0c0" stroke-width="1.600"/>
<rect x="0" y="963" width="1461" height="16" fill="#f0f0f0"/>
<path d="M10 967 6.500 971 10 975M1433 967 1436.500 971 1433 975" fill="none" stroke="#c0c0c0" stroke-width="1.600"/>

<!-- Status bar -->
<rect x="0" y="980" width="1465" height="29" fill="#e6e6e6"/>
<path d="M0 979.500H1465" stroke="#f8f8f8"/>
<rect x="763" y="982.500" width="30" height="22" fill="#e6e6e6" stroke="#b8b8b8"/>
<g transform="translate(768 986)"><rect x="3.500" y="4.500" width="10" height="9" fill="#dde6f0" stroke="#8aa0b8"/><path d="M1 4A4 4 0 0 1 8 2L10 1V6H5L7 4A2.500 2.500 0 0 0 3 5V10H1Z" fill="#e8b840" stroke="#a07818" stroke-width=".5"/></g>
<path d="M796.500 982V1006M900.500 982V1006M998.500 982V1006" stroke="#b0b0b0"/>
<text class="s" x="804" y="998" textLength="44">Writable</text>
<text class="s" x="908" y="998" textLength="63">Smart Insert</text>
<text class="s" x="1006" y="998" textLength="39">488 : 29</text>
<path d="M1095.500 988V1005M1386.500 988V1005M1416.500 988V1005" stroke="#8c8c8c" stroke-dasharray="2 3"/>
<text class="s" x="1392" y="999" textLength="12">LE</text>

<!-- Desktop stripes -->
<rect x="1465" y="0" width="4" height="1012" fill="#12345a"/>
<rect x="1465" y="619" width="423" height="393" fill="#0c3a6c"/>
<rect x="1465" y="619" width="225" height="9" fill="#4a94cc"/>
<rect x="1863" y="820" width="25" height="192" fill="#0d3058"/>
<rect x="1465" y="1004" width="423" height="8" fill="#102c4e"/>

<!-- RealTerm -->
<rect x="1469" y="0" width="419" height="27" fill="#fff"/><rect x="1469" y="27" width="419" height="1" fill="#a8a8a8"/>
<g transform="translate(1476 3)"><rect x="1" y="1" width="7" height="5" fill="#0a0" stroke="#000"/><rect x="8" y="8" width="9" height="7" fill="#00c" stroke="#000"/><path d="M3 6V10H8" stroke="#000" fill="none"/><rect x="6" y="15" width="10" height="3" fill="#0e0"/></g>
<text class="g" x="1501.700" y="16" textLength="218" style="font-size:13px">RealTerm: Serial Capture Program 2.0.0.70</text>
<path d="M1780 11.500H1790" stroke="#999"/><rect x="1825.500" y="6.500" width="9" height="9" fill="none" stroke="#999"/><path d="M1871 6 1881 16M1881 6 1871 16" stroke="#999"/>
<rect x="1469" y="28" width="419" height="339" fill="#000"/>
<text class="y" x="1469" y="39">Uart Initialised...</text><text class="c" x="1622" y="35" textLength="8">CR</text><text class="c" x="1630" y="36" textLength="8">LF</text>
<text class="c" x="1469" y="48" textLength="8">LF</text><text class="y" x="1477" y="51">$a12Write Executing..........</text><text class="c" x="1710" y="47" textLength="8">CR</text><text class="c" x="1718" y="48" textLength="8">LF</text>
<text class="c" x="1469" y="60" textLength="8">LF</text><text class="y" x="1477" y="63">$b34Read Executing..........</text><text class="c" x="1702" y="59" textLength="8">CR</text><text class="c" x="1710" y="60" textLength="8">LF</text>
<text class="c" x="1469" y="73" textLength="8">LF</text>
<rect x="1469" y="367" width="419" height="252" fill="#f0f0f0"/>
<rect x="1469" y="368" width="419" height="15" fill="#f0f0f0"/><rect x="1487" y="368" width="397" height="15" fill="#cdcdcd"/>
<path d="M1479 372 1475.500 375.500 1479 379" fill="none" stroke="#505050" stroke-width="1.600"/>
<!-- RT tabs -->
<rect x="1648.500" y="387.500" width="43" height="20" fill="#f7f7f7" stroke="#d8d8d8"/>
<path d="M1511.500 390V406M1516.500 390V406M1556.500 390V406M1605.500 390V406M1692.500 390V406M1748.500 390V406M1790.500 390V406" stroke="#a0a0a0"/>
<path d="M1471 407H1830" stroke="#e8e8e8"/>
<text class="s" x="1475" y="401" textLength="34">Display</text><text class="s" x="1522" y="401" textLength="18">Port</text><text class="s" x="1563" y="401" textLength="37">Capture</text><text class="s" x="1613" y="401" textLength="19">Pins</text><text class="s" x="1654" y="400" textLength="25">Send</text><text class="s" x="1697" y="401" textLength="46">Echo Port</text><text class="s" x="1756" y="401" textLength="15">I2C</text><text class="s" x="1797" y="401" textLength="25">I2C-2</text>
<rect x="1832.500" y="387.500" width="20" height="16" fill="#f0f0f0" stroke="#808080"/>
<text x="1835" y="400" font-family="Liberation Serif,serif" font-weight="bold" font-size="13" textLength="14">\n</text>
<rect x="1858.500" y="387.500" width="40" height="16" fill="#f0f0f0" stroke="#808080"/>
<text x="1860" y="400" font-family="Liberation Sans,sans-serif" font-weight="bold" font-size="13.500" letter-spacing=".6">Clear</text>
<!-- send page -->
<rect x="1471.500" y="415.500" width="430" height="85" fill="none" stroke="#a8a8a8"/>
<rect x="1474.500" y="425.500" width="253" height="18" fill="#fff" stroke="#777"/>
<rect x="1474.500" y="454.500" width="253" height="18" fill="#fff" stroke="#777"/>
<text x="1475" y="439" font-family="Liberation Serif,serif" font-weight="bold" font-size="13.500" letter-spacing="1">$a12</text>
<text x="1475" y="468" font-family="Liberation Serif,serif" font-weight="bold" font-size="13.500" letter-spacing="1">$b34</text>
<rect x="1710.500" y="427" width="16" height="15" fill="#e4e4e4" stroke="#a0a0a0"/><path d="M1714 432H1723L1718.500 437Z" fill="#000"/>
<rect x="1710.500" y="456" width="16" height="15" fill="#e4e4e4" stroke="#a0a0a0"/><path d="M1714 461H1723L1718.500 466Z" fill="#000"/>
<g fill="#e4e4e4" stroke="#a8a8a8"><rect x="1730.500" y="424.500" width="74" height="23"/><rect x="1810.500" y="424.500" width="70" height="23"/><rect x="1730.500" y="454.500" width="74" height="24"/></g>
<rect x="1810.500" y="454.500" width="70" height="24" fill="#e4e4e4" stroke="#555"/>
<text class="s" x="1733" y="440" textLength="69" fill="#111">Send Numbers</text><text class="s" x="1818" y="440" textLength="54" fill="#111">Send ASCII</text>
<text class="s" x="1733" y="470" textLength="69" fill="#111">Send Numbers</text><text class="s" x="1818" y="470" textLength="54" fill="#111">Send ASCII</text>
<rect x="1882.500" y="422.500" width="10" height="75" fill="#f0f0f0" stroke="#a0a0a0"/>
<g fill="#f0f0f0" stroke="#666"><rect x="1886.500" y="432.500" width="6" height="9"/><rect x="1886.500" y="445.500" width="6" height="9"/><rect x="1886.500" y="457.500" width="6" height="9"/><rect x="1886.500" y="469.500" width="6" height="9"/><rect x="1886.500" y="482.500" width="6" height="10"/></g>
<rect x="1474.500" y="476.500" width="30" height="19" fill="#fff" stroke="#aaa"/>
<g fill="#e4e4e4" stroke="#a0a0a0"><rect x="1510.500" y="476.500" width="19" height="19"/><rect x="1535.500" y="476.500" width="19" height="19"/><rect x="1559.500" y="476.500" width="19" height="19"/></g>
<text class="s" x="1517" y="489" fill="#111">0</text><text class="s" x="1538" y="489" textLength="13" fill="#111">^C</text><text class="s" x="1563" y="489" textLength="12" fill="#111">LF</text>
<text class="s" x="1586" y="493" textLength="39" fill="#111">Repeats</text>
<rect x="1633.500" y="477.500" width="39" height="19" fill="#fff" stroke="#666"/>
<text class="s" x="1637" y="491" fill="#111">1</text>
<rect x="1656" y="478" width="15" height="18" fill="#e4e4e4"/><path d="M1659 485H1668L1663.500 480ZM1659 489H1668L1663.500 494Z" fill="#000"/>
<rect x="1732.500" y="486.500" width="11" height="11" fill="#fff" stroke="#888"/><text class="s" x="1749" y="496" textLength="28" fill="#111">Literal</text>
<rect x="1797.500" y="486.500" width="11" height="11" fill="#fff" stroke="#888"/><text class="s" x="1814" y="496" textLength="60" fill="#111">Strip Spaces</text>
<rect x="1473.500" y="504.500" width="430" height="69" fill="none" stroke="#a8a8a8"/>
<rect x="1480" y="503" width="83" height="12" fill="#f0f0f0"/>
<text class="s" x="1481" y="513" textLength="81" fill="#111">Dump File to Port</text>
<rect x="1482.500" y="519.500" width="244" height="18" fill="#fff" stroke="#777"/>
<text class="s" x="1485" y="532" textLength="92" fill="#111">c:\temp\capture.txt</text>
<rect x="1708.500" y="521" width="17" height="15" fill="#e4e4e4" stroke="#a0a0a0"/><path d="M1712 526H1721L1716.500 531Z" fill="#000"/>
<g fill="#e4e4e4" stroke="#a0a0a0"><rect x="1732.500" y="517.500" width="21" height="24"/><rect x="1757.500" y="517.500" width="60" height="24"/><rect x="1825.500" y="517.500" width="58" height="24"/></g>
<text class="s" x="1737" y="534" fill="#111">...</text><text class="s" x="1765" y="532" textLength="44" fill="#111">Send File</text>
<path d="M1836 523 1848 536M1848 523 1836 536" stroke="#a50e0e" stroke-width="3.500"/>
<text class="s" x="1855" y="533" textLength="22" fill="#111">Stop</text>
<path d="M1546 548.500H1578" stroke="#222" stroke-dasharray="2 1"/>
<rect x="1480.500" y="554.500" width="272" height="11" fill="#f0f0f0" stroke="#b8b8b8"/>
<text class="s" x="1858" y="562" fill="#111" letter-spacing=".5">Repeat</text>
<rect x="1469" y="578" width="419" height="1.500" fill="#808080"/>
<rect x="1469" y="580" width="419" height="23" fill="#f0f0f0"/>
<path d="M1820.500 582V602" stroke="#a0a0a0"/><path d="M1820 582.500H1888" stroke="#fff"/>
<text class="s" x="1822" y="597" textLength="64" style="fill:#1a1a50">Char Count:1</text>
<rect x="1469" y="604" width="419" height="15" fill="#f0f0f0"/><rect x="1487" y="604" width="323" height="15" fill="#cdcdcd"/>
<path d="M1479 608 1475.500 611.500 1479 615" fill="none" stroke="#505050" stroke-width="1.600"/>

<!-- Tera Term -->
<rect x="1470" y="628" width="393" height="376" fill="#fff"/>
<rect x="1470" y="678.500" width="393" height="1.500" fill="#a0a0a0"/>
<g transform="translate(1481 637)"><rect x="1" y="0" width="12" height="9" fill="#ffe000" stroke="#555"/><text x="2.500" y="7.500" font-family="Liberation Sans,sans-serif" font-size="7" font-weight="bold" fill="#223">VT</text><rect x="0" y="10" width="14" height="2" fill="#888"/></g>
<text class="g" x="1501.700" y="647" textLength="113" style="font-size:13px">COM4 - Tera Term VT</text>
<path d="M1744 643.500H1754" stroke="#999"/><rect x="1789.500" y="638.500" width="9" height="10" fill="none" stroke="#999"/><path d="M1835 638 1845 649M1845 638 1835 649" stroke="#999"/>
<text class="s" x="1475" y="672" textLength="18" style="fill:#666">File</text><text class="s" x="1507" y="672" textLength="20" style="fill:#666">Edit</text><text class="s" x="1541" y="672" textLength="30" style="fill:#666">Setup</text><text class="s" x="1585" y="672" textLength="40" style="fill:#666">Control</text><text class="s" x="1639" y="672" textLength="44" style="fill:#666">Window</text><text class="s" x="1697" y="672" textLength="25" style="fill:#666">Help</text>
<rect x="1470" y="680" width="376" height="323" fill="#000"/>
<rect x="1846" y="680" width="17" height="323" fill="#f0f0f0"/><rect x="1847" y="970" width="15" height="17" fill="#cdcdcd"/>
<path d="M1851 691 1854.500 687.500 1858 691M1851 994 1854.500 997.500 1858 994" fill="none" stroke="#505050" stroke-width="1.600"/>
<text class="w" x="1470" y="690">Read Data[237 ]:   0,0,0,0</text>
<text class="w" x="1470" y="714">Read Data[238 ]:   0,0,0,0</text>
<text class="w" x="1470" y="738">Read Data[239 ]:   0,0,0,0</text>
<text class="w" x="1470" y="762">Read Data[240 ]:   0,0,0,0</text>
<text class="w" x="1470" y="786">Read Data[241 ]:   0,0,0,0</text>
<text class="w" x="1470" y="810">Read Data[242 ]:   0,0,0,0</text>
<text class="w" x="1470" y="834">Read Data[243 ]:   0,0,0,0</text>
<text class="w" x="1470" y="858">Read Data[244 ]:   0,0,0,0</text>
<text class="w" x="1470" y="882">Read Data[245 ]:   0,0,0,0</text>
<text class="w" x="1470" y="906">Read Data[246 ]:   0,0,0,0</text>
<text class="w" x="1470" y="930">Read Data[247 ]:   0,0,0,0</text>
<text class="w" x="1470" y="954">Read Data[248 ]:   0,0,0,0</text>
<text class="w" x="1470" y="978">Read Data[249 ]:   0,0,0,0</text>
<rect x="1470.500" y="993" width="7" height="10" fill="none" stroke="#fff"/>
</svg>
</body></html>
